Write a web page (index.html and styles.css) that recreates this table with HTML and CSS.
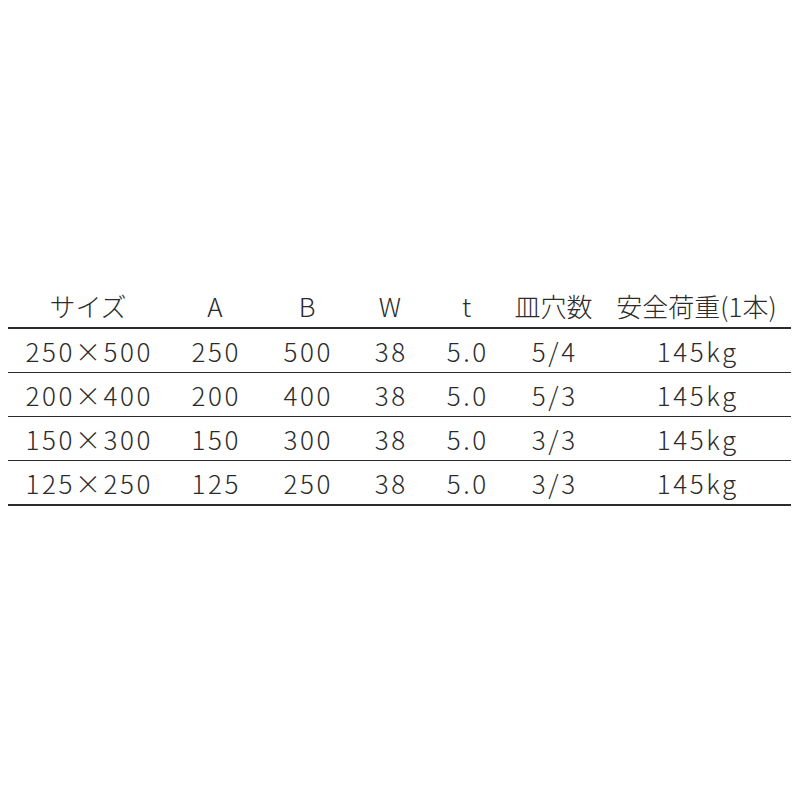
FILE: index.html
```html
<!DOCTYPE html>
<html lang="ja">
<head>
<meta charset="utf-8">
<link rel="stylesheet" href="styles.css">
</head>
<body>
<div class="page">
  <table class="spec">
    <colgroup>
      <col class="c1"><col class="c2"><col class="c3"><col class="c4"><col class="c5"><col class="c6"><col class="c7">
    </colgroup>
    <thead>
      <tr><th>サイズ</th><th>A</th><th>B</th><th>W</th><th>t</th><th>皿穴数</th><th>安全荷重(1本)</th></tr>
    </thead>
    <tbody>
      <tr><td>250×500</td><td>250</td><td>500</td><td>38</td><td>5.0</td><td>5/4</td><td>145kg</td></tr>
      <tr><td>200×400</td><td>200</td><td>400</td><td>38</td><td>5.0</td><td>5/3</td><td>145kg</td></tr>
      <tr><td>150×300</td><td>150</td><td>300</td><td>38</td><td>5.0</td><td>3/3</td><td>145kg</td></tr>
      <tr class="last"><td>125×250</td><td>125</td><td>250</td><td>38</td><td>5.0</td><td>3/3</td><td>145kg</td></tr>
    </tbody>
  </table>
</div>
</body>
</html>
```
FILE: styles.css
```css
html, body {
  margin: 0;
  padding: 0;
  background: #ffffff;
}
.page {
  width: 800px;
  height: 800px;
  padding: 284px 9px 0 8px;
  box-sizing: border-box;
}
.spec {
  width: 783px;
  border-collapse: collapse;
  table-layout: fixed;
  font-family: "Noto Sans CJK JP", "Noto Sans", sans-serif;
  font-weight: 300;
  color: #2b2b2b;
  font-size: 26px;
}
.c1 { width: 160px; }
.c2 { width: 94px; }
.c3 { width: 90px; }
.c4 { width: 76px; }
.c5 { width: 77px; }
.c6 { width: 97px; }
.c7 { width: 189px; }
.spec th, .spec td {
  padding: 0;
  text-align: center;
  white-space: nowrap;
  line-height: 1;
}
.spec th {
  font-weight: 300;
  height: 43px;
  border-bottom: 2px solid #2b2b2b;
}
.spec td {
  height: 43px;
  letter-spacing: 2.6px;
  text-indent: 2.6px;
  border-bottom: 1px solid #2b2b2b;
}
.spec tr.last td {
  border-bottom: 2px solid #2b2b2b;
}
```
